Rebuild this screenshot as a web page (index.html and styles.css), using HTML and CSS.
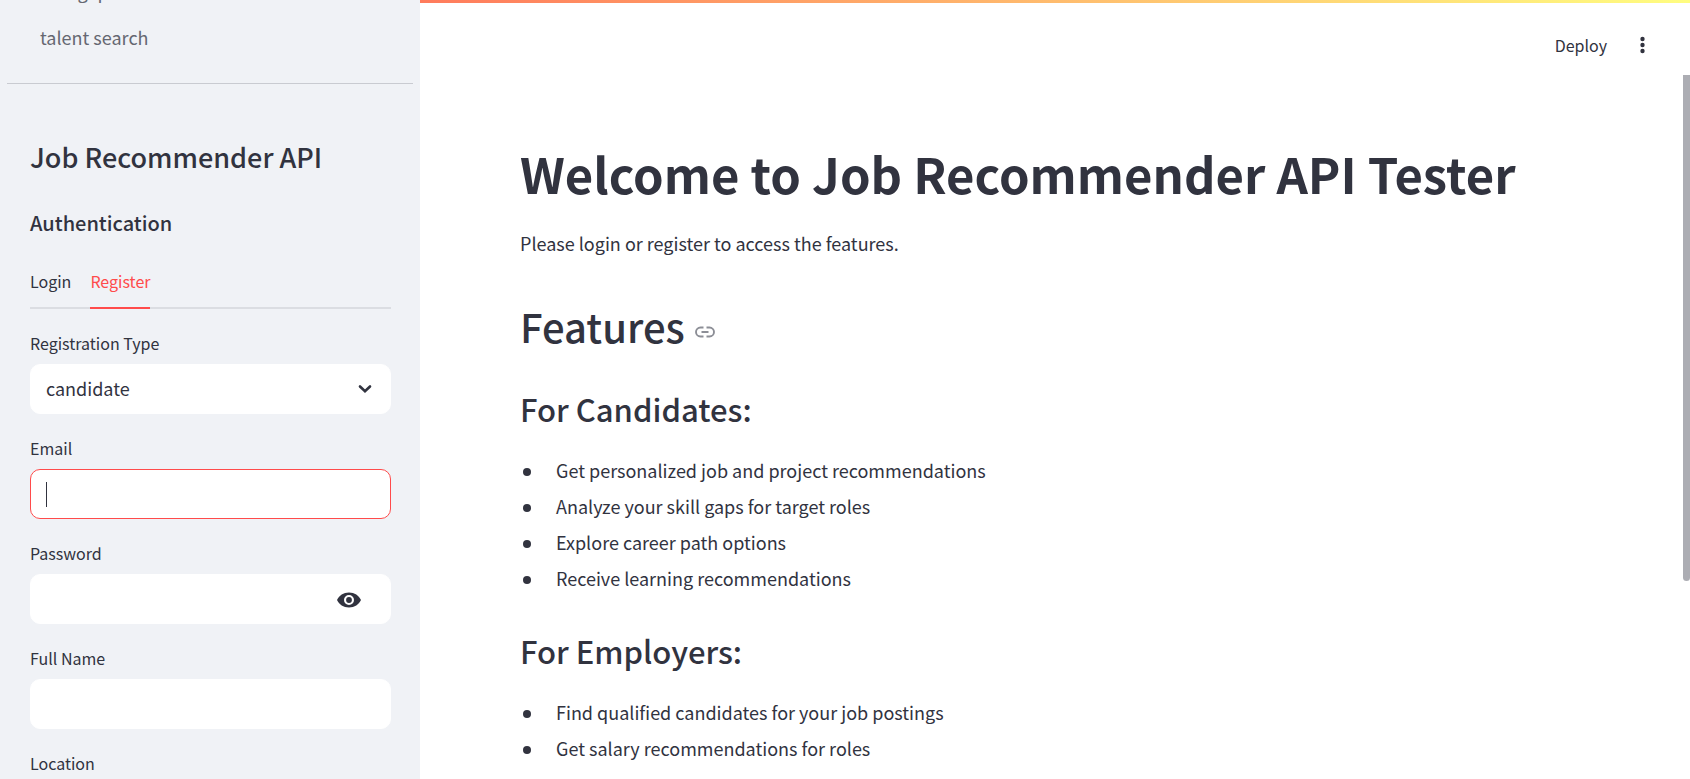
FILE: index.html
```html
<!DOCTYPE html>
<html lang="en">
<head>
<meta charset="utf-8">
<title>Job Recommender API Tester</title>
<link rel="stylesheet" href="styles.css">
</head>
<body>
<div class="app">
  <aside class="sidebar">
    <nav class="nav">
      <a class="nav-link" href="#skill-gap">skill gap</a>
      <a class="nav-link" href="#talent-search">talent search</a>
    </nav>
    <hr class="divider">
    <div class="panel">
      <h2 class="panel-title">Job Recommender API</h2>
      <h3 class="panel-subtitle">Authentication</h3>
      <div class="tabs" role="tablist">
        <button class="tab" type="button" role="tab" aria-selected="false">Login</button>
        <button class="tab tab-active" type="button" role="tab" aria-selected="true">Register</button>
      </div>
      <form class="form">
        <div class="field">
          <label class="label" for="type">Registration Type</label>
          <div class="control">
            <select class="input" id="type"><option>candidate</option><option>employer</option></select>
            <svg class="chevron" viewBox="0 0 20 20" aria-hidden="true"><path d="M5 7.500 10 12.300 15 7.500" fill="none" stroke="currentColor" stroke-width="2.600" stroke-linecap="round"/></svg>
          </div>
        </div>
        <div class="field">
          <label class="label" for="email">Email</label>
          <div class="control control-focus">
            <input class="input" id="email" type="text">
            <span class="caret"></span>
          </div>
        </div>
        <div class="field">
          <label class="label" for="password">Password</label>
          <div class="control">
            <input class="input" id="password" type="password">
            <button class="reveal" type="button" aria-label="Show password">
              <svg class="eye" viewBox="0 0 24 16" aria-hidden="true"><path fill="currentColor" fill-rule="evenodd" d="M12 .5C6.500.5 2 3.600 0 8c2 4.400 6.500 7.500 12 7.500S22 12.400 24 8C22 3.600 17.500.5 12 .5ZM12 13a5 5 0 1 1 0-10 5 5 0 0 1 0 10Zm0-7.900a2.900 2.900 0 1 0 0 5.800 2.900 2.900 0 0 0 0-5.800Z"/></svg>
            </button>
          </div>
        </div>
        <div class="field">
          <label class="label" for="name">Full Name</label>
          <div class="control"><input class="input" id="name" type="text"></div>
        </div>
        <div class="field">
          <label class="label" for="location">Location</label>
          <div class="control"><input class="input" id="location" type="text"></div>
        </div>
      </form>
    </div>
  </aside>
  <div class="page">
    <div class="decoration"></div>
    <header class="toolbar">
      <button class="deploy" type="button">Deploy</button>
      <button class="menu" type="button" aria-label="Main menu">
        <svg class="dots" viewBox="0 0 6 18" aria-hidden="true"><g fill="currentColor"><circle cx="3" cy="3" r="2.200"/><circle cx="3" cy="9" r="2.200"/><circle cx="3" cy="15" r="2.200"/></g></svg>
      </button>
    </header>
    <main class="content">
      <h1 class="title">Welcome to Job Recommender API Tester</h1>
      <p class="intro">Please login or register to access the features.</p>
      <h2 class="section">Features
        <a class="anchor" href="#features" aria-label="Link to Features"><svg class="link-icon" viewBox="0 0 20 12" aria-hidden="true"><path d="M8.500 1.500H5.500a4.500 4.500 0 0 0 0 9h3M11.500 1.500h3a4.500 4.500 0 0 1 0 9h-3M6.500 6h7" fill="none" stroke="currentColor" stroke-width="1.900"/></svg></a>
      </h2>
      <h3 class="group">For Candidates:</h3>
      <ul class="list">
        <li>Get personalized job and project recommendations</li>
        <li>Analyze your skill gaps for target roles</li>
        <li>Explore career path options</li>
        <li>Receive learning recommendations</li>
      </ul>
      <h3 class="group">For Employers:</h3>
      <ul class="list">
        <li>Find qualified candidates for your job postings</li>
        <li>Get salary recommendations for roles</li>
      </ul>
    </main>
    <div class="scroll-thumb"></div>
  </div>
</div>
</body>
</html>
```
FILE: styles.css
```css
* { box-sizing: border-box; }
body {
  margin: 0;
  color: #31333f;
  background: #fff;
  font-family: "Noto Sans CJK SC", "Noto Sans", sans-serif;
  font-size: 18px;
}
h1, h2, h3, p, ul { margin: 0; padding: 0; }
button, input, select { font: inherit; color: inherit; border: 0; background: none; padding: 0; }
.app { display: flex; height: 100vh; overflow: hidden; }

.sidebar { flex: 0 0 420px; background: #f0f2f6; overflow: hidden; }
.nav { display: flex; flex-direction: column; justify-content: flex-end; gap: 16px; height: 52px; padding: 0 40px; }
.nav-link { flex: none; line-height: 30px; color: #656771; text-decoration: none; }
.divider { margin: 31px 7px 0; border: 0; border-top: 1px solid #c9cbd1; }
.panel { padding: 55px 29px 0 30px; }
.panel-title { font-size: 27px; line-height: 36px; font-weight: 500; }
.panel-subtitle { margin-top: 33px; font-size: 20px; line-height: 30px; font-weight: 500; }
.tabs { display: flex; gap: 19px; margin-top: 20px; border-bottom: 2px solid #dbdde2; }
.tab { height: 51px; margin-bottom: -2px; padding-bottom: 4px; font-size: 16px; border-bottom: 2px solid transparent; }
.tab-active { color: #ff4b4b; border-bottom-color: #ff4b4b; }
.form { display: flex; flex-direction: column; gap: 19px; padding-top: 19px; }
.label { display: block; height: 36px; font-size: 16px; line-height: 30px; }
.control { position: relative; display: flex; height: 50px; background: #fff; border: 1px solid #fff; border-radius: 10px; }
.control-focus { border-color: #ff4b4b; }
.input { flex: 1; min-width: 0; padding: 0 15px 2px; outline: 0; appearance: none; }
.chevron { position: absolute; right: 15px; top: 14px; width: 20px; height: 20px; pointer-events: none; }
.caret { position: absolute; left: 15px; top: 12px; width: 1px; height: 25px; background: #31333f; }
.reveal { display: flex; align-items: center; padding: 1px 29px 0 0; }
.eye { width: 24px; height: 16px; }

.page { position: relative; flex: 1; min-width: 0; }
.decoration { height: 3px; background: linear-gradient(90deg, #ff7b5c, #fffd80); }
.toolbar { display: flex; align-items: center; justify-content: flex-end; gap: 32px; height: 72px; padding: 12px 44px 0 0; }
.deploy { font-size: 16px; }
.menu { display: flex; }
.dots { width: 7px; height: 18px; }
.content { padding: 63px 100px 0; }
.title { font-size: 49px; line-height: 70px; font-weight: 700; }
.intro { margin-top: 19px; line-height: 32px; }
.section { display: flex; align-items: center; gap: 10px; margin-top: 40px; font-size: 40px; line-height: 55px; font-weight: 500; }
.anchor { display: flex; padding-top: 10px; color: #8c8e96; }
.link-icon { width: 20px; height: 12px; }
.group { margin-top: 34px; font-size: 31px; line-height: 42px; font-weight: 500; }
.list { margin-top: 22px; list-style: none; }
.list li { display: flex; align-items: center; line-height: 36px; }
.list li::before { content: ""; width: 8px; height: 8px; margin: 3px 25px 0 3px; border-radius: 50%; background: #31333f; }
.scroll-thumb { position: absolute; right: 0; top: 75px; width: 7px; height: 65%; background: #acadb3; border-radius: 0 0 4px 4px; }
```
